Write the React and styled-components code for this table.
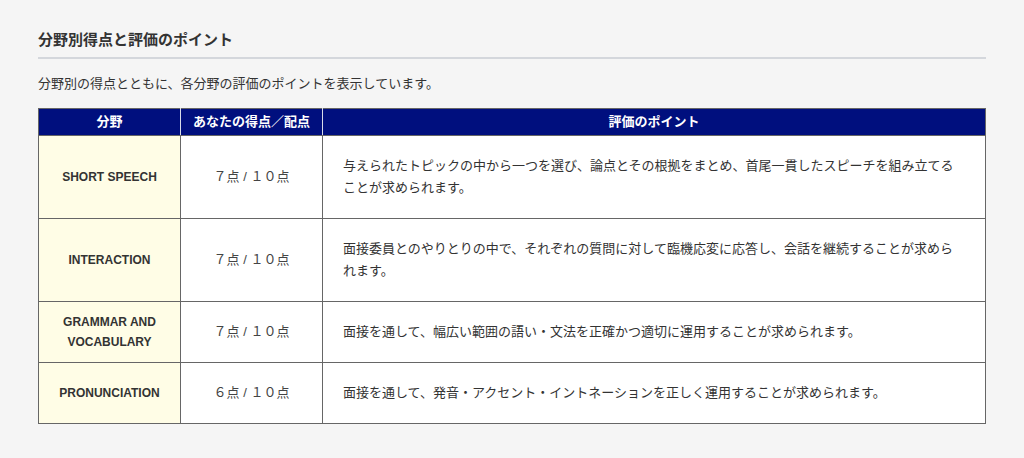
import React from 'react';
import styled, { createGlobalStyle } from 'styled-components';

const GlobalStyle = createGlobalStyle`
    html, body {
        margin: 0;
        padding: 0;
        background: #f5f5f5;
    }
    body {
        font-family: "Liberation Sans", "Noto Sans CJK JP", sans-serif;
        color: #333333;
    }
`;

const Wrapper = styled.div`
    padding: 29px 38px 0 38px;
`;

const Heading = styled.h2`
    margin: 0;
    padding-bottom: 6px;
    font-size: 15px;
    line-height: 22px;
    font-weight: bold;
    color: #333333;
    border-bottom: 2px solid #d4d7dc;
`;

const Lead = styled.p`
    margin: 14px 0 13px 0;
    font-size: 13px;
    line-height: 22px;
    color: #333333;
`;

const Table = styled.table`
    width: 100%;
    border-collapse: collapse;
    table-layout: fixed;
    border: 1px solid #666666;
    background: #ffffff;
`;

const HeadCell = styled.th`
    background: #000f7e;
    color: #ffffff;
    font-size: 13px;
    font-weight: bold;
    line-height: 18px;
    padding: 4px 8px;
    text-align: center;
    border-left: 1px solid #d8dbe8;
    border-bottom: 1px solid #666666;

    &:first-child {
        border-left: none;
    }
`;

const FieldCell = styled.td`
    background: #fffde6;
    font-size: 12px;
    font-weight: bold;
    line-height: 20px;
    padding: 8px 10px;
    text-align: center;
    vertical-align: middle;
    color: #333333;
    border: 1px solid #666666;
`;

const ScoreCell = styled.td`
    font-size: 13px;
    line-height: 22px;
    padding: 8px 10px;
    text-align: center;
    vertical-align: middle;
    color: #444444;
    border: 1px solid #666666;
`;

const PointCell = styled.td`
    font-size: 13px;
    line-height: 22px;
    padding: 19px 20px;
    text-align: left;
    vertical-align: middle;
    color: #333333;
    border: 1px solid #666666;
`;

const rows = [
    {
        field: 'SHORT SPEECH',
        score: '７点 / １０点',
        point: '与えられたトピックの中から一つを選び、論点とその根拠をまとめ、首尾一貫したスピーチを組み立てることが求められます。',
    },
    {
        field: 'INTERACTION',
        score: '７点 / １０点',
        point: '面接委員とのやりとりの中で、それぞれの質問に対して臨機応変に応答し、会話を継続することが求められます。',
    },
    {
        field: 'GRAMMAR AND VOCABULARY',
        score: '７点 / １０点',
        point: '面接を通して、幅広い範囲の語い・文法を正確かつ適切に運用することが求められます。',
    },
    {
        field: 'PRONUNCIATION',
        score: '６点 / １０点',
        point: '面接を通して、発音・アクセント・イントネーションを正しく運用することが求められます。',
    },
];

const App = () => (
    <Wrapper>
        <GlobalStyle />
        <Heading>{'分野別得点と評価のポイント'}</Heading>
        <Lead>{'分野別の得点とともに、各分野の評価のポイントを表示しています。'}</Lead>
        <Table>
            <colgroup>
                <col style={{ width: '142px' }} />
                <col style={{ width: '142px' }} />
                <col />
            </colgroup>
            <thead>
                <tr>
                    <HeadCell>{'分野'}</HeadCell>
                    <HeadCell>{'あなたの得点／配点'}</HeadCell>
                    <HeadCell>{'評価のポイント'}</HeadCell>
                </tr>
            </thead>
            <tbody>
                {rows.map((row) => (
                    <tr key={row.field}>
                        <FieldCell>{row.field}</FieldCell>
                        <ScoreCell>{row.score}</ScoreCell>
                        <PointCell>{row.point}</PointCell>
                    </tr>
                ))}
            </tbody>
        </Table>
    </Wrapper>
);

export default App;
